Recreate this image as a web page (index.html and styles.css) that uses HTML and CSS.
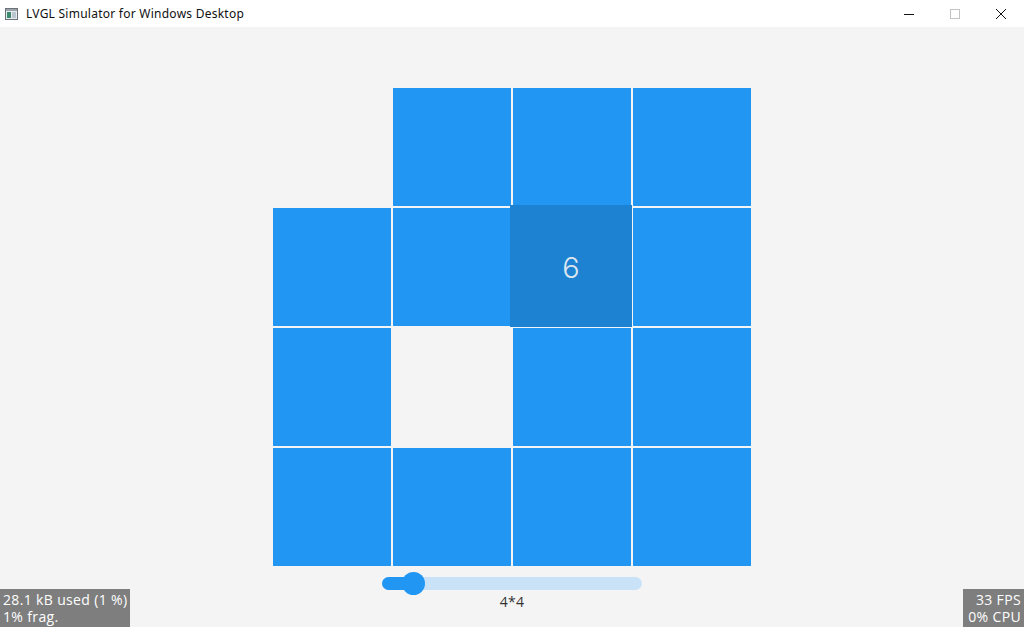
FILE: index.html
```html
<!DOCTYPE html>
<html>
<head>
<meta charset="utf-8">
<link rel="stylesheet" href="styles.css">
</head>
<body>
<div class="titlebar">
  <div class="title-left">
    <svg class="app-icon" width="13" height="12" viewBox="0 0 13 12">
      <rect x="0.5" y="0.5" width="12" height="11" fill="#e8ecef" stroke="#6b7278"/>
      <rect x="1" y="1" width="11" height="2" fill="#9aa3aa"/>
      <rect x="2" y="4" width="4" height="6" fill="#3c8a6e"/>
      <rect x="7" y="4" width="4" height="6" fill="#b9c6cf"/>
    </svg>
    <span class="title-text">LVGL Simulator for Windows Desktop</span>
  </div>
  <div class="controls">
    <span class="ctl"><svg width="12" height="12" viewBox="0 0 12 12"><path d="M1 6.5H11" stroke="#111" stroke-width="1"/></svg></span>
    <span class="ctl"><svg width="12" height="12" viewBox="0 0 12 12"><rect x="1.5" y="1.5" width="9" height="9" fill="none" stroke="#c4c4c4"/></svg></span>
    <span class="ctl"><svg width="12" height="12" viewBox="0 0 12 12"><path d="M1 1L11 11M11 1L1 11" stroke="#111" stroke-width="1"/></svg></span>
  </div>
</div>
<div class="screen">
  <div class="grid">
    <div class="cell empty"></div>
    <div class="cell"></div>
    <div class="cell"></div>
    <div class="cell"></div>
    <div class="cell"></div>
    <div class="cell"></div>
    <div class="cell holder"><div class="active">6</div></div>
    <div class="cell"></div>
    <div class="cell"></div>
    <div class="cell empty"></div>
    <div class="cell"></div>
    <div class="cell"></div>
    <div class="cell"></div>
    <div class="cell"></div>
    <div class="cell"></div>
    <div class="cell"></div>
  </div>
  <div class="slider">
    <div class="track"><div class="indicator"></div><div class="knob"></div></div>
  </div>
  <div class="size-label">4*4</div>
  <div class="perf mem"><div class="pline">28.1 kB used (1 %)</div><div class="pline">1% frag.</div></div>
  <div class="perf fps"><div class="pline">33 FPS</div><div class="pline">0% CPU</div></div>
</div>
</body>
</html>
```
FILE: styles.css
```css
html, body {
  margin: 0;
  padding: 0;
}
body {
  width: 1024px;
  height: 627px;
  overflow: hidden;
  background: #f4f4f4;
  font-family: "Open Sans", "Noto Sans", sans-serif;
}
.titlebar {
  height: 27px;
  background: #ffffff;
  display: flex;
  align-items: center;
  justify-content: space-between;
}
.title-left {
  display: flex;
  align-items: center;
  padding-left: 5px;
  gap: 8px;
}
.app-icon {
  display: block;
}
.title-text {
  font-family: "Noto Sans", "Liberation Sans", sans-serif;
  font-size: 12px;
  color: #111;
  letter-spacing: 0.25px;
}
.controls {
  display: flex;
  height: 27px;
  align-items: center;
}
.ctl {
  width: 46px;
  height: 27px;
  display: flex;
  align-items: center;
  justify-content: center;
}
.ctl svg {
  display: block;
}
.screen {
  position: relative;
  height: 600px;
  padding-top: 61px;
  box-sizing: border-box;
  display: flex;
  flex-direction: column;
  align-items: center;
}
.grid {
  display: grid;
  grid-template-columns: repeat(4, 118px);
  grid-auto-rows: 118px;
  gap: 2px;
  width: 478px;
}
.cell {
  background: #2196f3;
}
.cell.empty {
  background: transparent;
}
.cell.holder {
  position: relative;
  background: #2196f3;
}
.active {
  position: absolute;
  left: -3px;
  top: -3px;
  right: -1px;
  bottom: -1px;
  padding-top: 3px;
  box-sizing: border-box;
  background: #1e82d3;
  color: #dde6ee;
  font-family: "Inter", "Open Sans", sans-serif;
  font-size: 29px;
  font-weight: 300;
  display: flex;
  align-items: center;
  justify-content: center;
}
.slider {
  margin-top: 11px;
  width: 260px;
}
.track {
  position: relative;
  height: 13px;
  border-radius: 7px;
  background: #c9e2f7;
}
.indicator {
  width: 31px;
  height: 13px;
  border-radius: 7px;
  background: #2196f3;
}
.knob {
  position: absolute;
  left: 20px;
  top: -5px;
  width: 23px;
  height: 23px;
  border-radius: 50%;
  background: #2196f3;
}
.size-label {
  margin-top: 4px;
  font-size: 14px;
  color: #333;
  line-height: 16px;
  font-family: "Open Sans", sans-serif;
  letter-spacing: 0.3px;
}
.perf {
  position: absolute;
  bottom: 0;
  height: 38px;
  box-sizing: border-box;
  background: #7e7e7e;
  color: #ffffff;
  font-family: "Open Sans", sans-serif;
  font-size: 14px;
  padding: 2px 3px;
  display: flex;
  flex-direction: column;
}
.pline {
  height: 17px;
  line-height: 17px;
  letter-spacing: 0.35px;
  white-space: nowrap;
}
.mem {
  left: 0;
  width: 130px;
}
.fps {
  right: 0;
  width: 61px;
  align-items: flex-end;
}
```
